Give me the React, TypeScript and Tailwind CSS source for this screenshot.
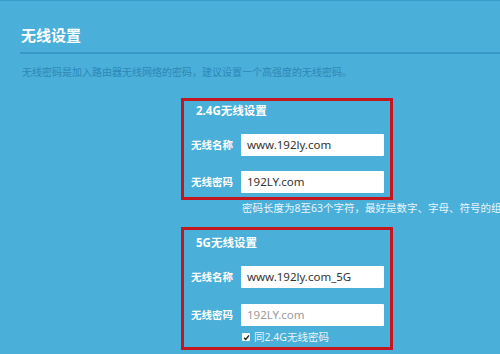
import React from 'react';

const FONT = { fontFamily: '"Noto Sans", "Noto Sans CJK SC", sans-serif' };

const Field: React.FC<{ label: string; value: string; muted?: boolean; className?: string }> = ({ label, value, muted, className }) => (
  <div className={`flex items-center h-[22px] ${className ?? ''}`}>
    <span className="w-[57px] shrink-0 pl-[7px] text-[10.5px] font-bold text-white leading-none whitespace-nowrap">{label}</span>
    <div className="w-[143px] shrink-0 h-[22px] bg-white rounded-[1px] flex items-center pl-[6px]">
      <span className={`text-[11.5px] leading-none whitespace-nowrap ${muted ? 'text-[#9a9a9a]' : 'text-[#333]'}`}>{value}</span>
    </div>
  </div>
);

export default function App() {
  return (
    <div style={FONT} className="w-[500px] h-[354px] overflow-hidden bg-[#4aafd9] border-t border-[#3a9cc9] flex flex-col">
      {/* Header */}
      <div className="pl-[21px] pt-[26px]">
        <h1 className="text-[15px] font-bold text-white leading-[16px]">无线设置</h1>
      </div>
      <div className="ml-[20px] mt-[9px] h-[2px] bg-[#3a98c7]" />
      <p className="pl-[22px] mt-[12px] text-[10px] leading-[12px] text-[#2d87b7] whitespace-nowrap">
        无线密码是加入路由器无线网络的密码，建议设置一个高强度的无线密码。
      </p>

      {/* 2.4G */}
      <div className="ml-[181px] mt-[20px] w-[212px] border-[3px] border-[#c3161f] pt-[3px] pb-[4px]">
        <div className="pl-[12px] text-[11.5px] font-bold text-white leading-[14px]">2.4G无线设置</div>
        <Field className="mt-[16px]" label="无线名称" value="www.192ly.com" />
        <Field className="mt-[15px]" label="无线密码" value="192LY.com" />
      </div>
      <p className="ml-[242px] mt-[2px] text-[10.5px] leading-[13px] text-[#e8f5fb] whitespace-nowrap">
        密码长度为8至63个字符，最好是数字、字母、符号的组合
      </p>

      {/* 5G */}
      <div className="ml-[181px] mt-[12px] w-[212px] border-[3px] border-[#c3161f] pt-[6px] pb-[3px]">
        <div className="pl-[12px] text-[11.5px] font-bold text-white leading-[14px]">5G无线设置</div>
        <Field className="mt-[16px]" label="无线名称" value="www.192ly.com_5G" />
        <Field className="mt-[16px]" label="无线密码" value="192LY.com" muted />
        <div className="flex items-center h-[14px] mt-[4px] pl-[58px] gap-[4px]">
          <span className="w-[8px] h-[8px] bg-white rounded-[1px] flex items-center justify-center">
            <svg width="7" height="7" viewBox="0 0 8 8">
              <path d="M1.2 4.2 L3.2 6.2 L6.8 1.6" fill="none" stroke="#222" strokeWidth="1.6" />
            </svg>
          </span>
          <span className="text-[10.5px] leading-none text-[#e8f5fb]">同2.4G无线密码</span>
        </div>
      </div>
    </div>
  );
}
